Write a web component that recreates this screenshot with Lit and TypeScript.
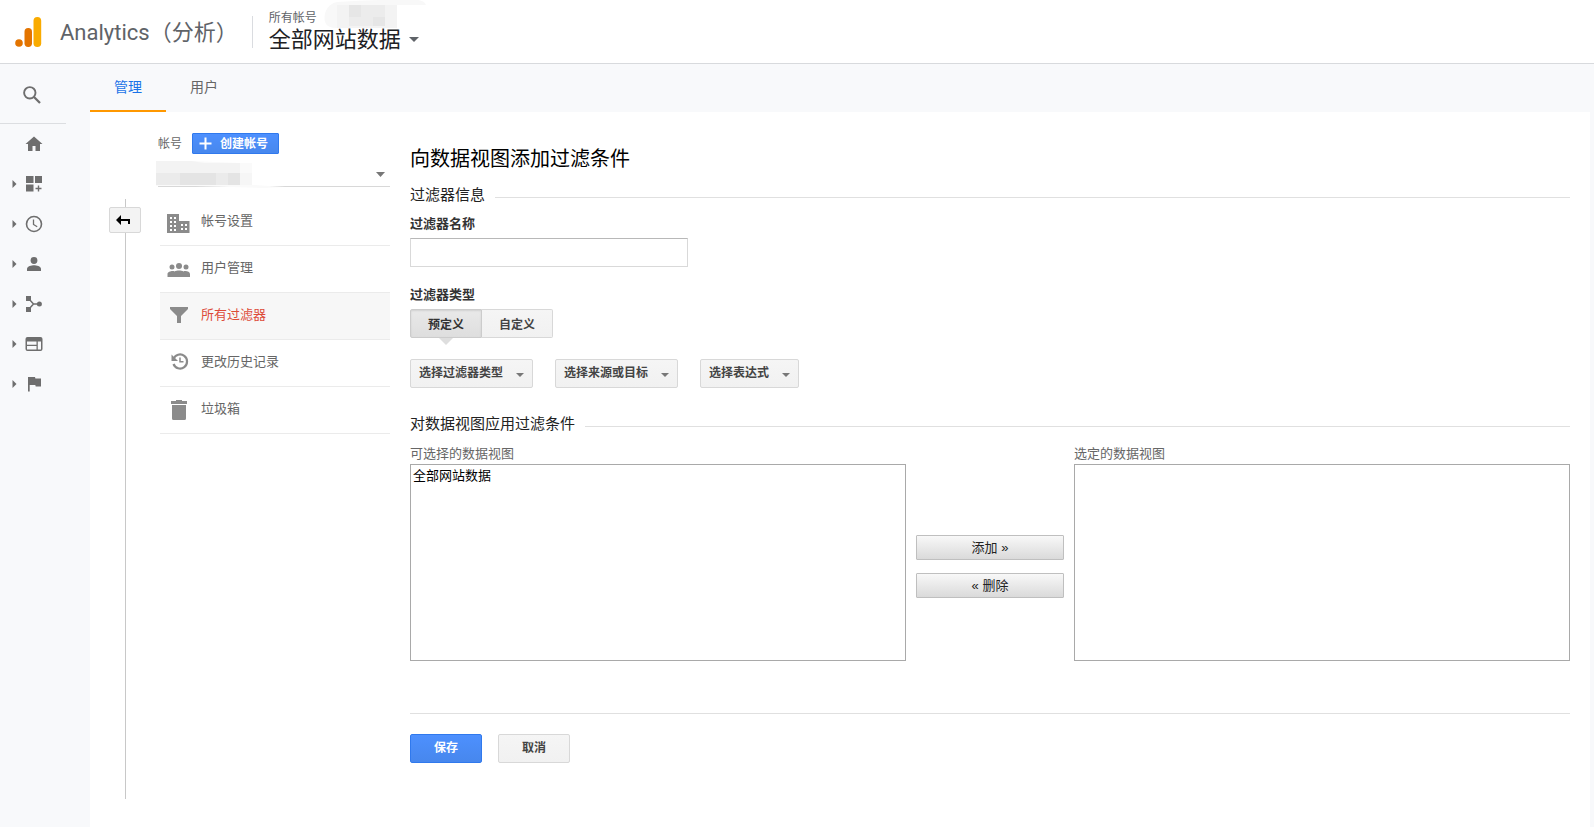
import { LitElement, html, svg, css } from "lit";
import { customElement, state } from "lit/decorators.js";

const railItems = [
  { label: "首页", open: false, icon: svg`<path d="M13 5.500 4.500 13H7v7h4.500v-5h3v5H19v-7h2.500z"/>` },
  { label: "自定义", open: true, icon: svg`<path d="M5 5h7.500v7H5zM14 5h7v7h-7zM5 13.500h7.500v7H5zM16.800 14.500h1.400v2.300h2.300v1.400h-2.300v2.300h-1.400v-2.300h-2.300v-1.400h2.300z"/>` },
  { label: "实时", open: true, icon: svg`<circle cx="13" cy="13" r="7.500" fill="none" stroke="#6e6e6e" stroke-width="1.600"/><path d="M12.500 8.500v5l3.700 2.300" fill="none" stroke="#6e6e6e" stroke-width="1.300"/>` },
  { label: "受众群体", open: true, icon: svg`<circle cx="13" cy="9.500" r="3.400"/><path d="M6 20v-2.300c0-2.400 4.700-3.500 7-3.500s7 1.100 7 3.500V20z"/>` },
  { label: "流量获取", open: true, icon: svg`<path d="M5 5h5v5H5zM5 16h5v5H5z"/><path d="M8 8l4.500 5L8 18M12 13h6" fill="none" stroke="#6e6e6e" stroke-width="1.500"/><circle cx="18.400" cy="13" r="2.500"/>` },
  { label: "行为", open: true, icon: svg`<path fill-rule="evenodd" d="M6.500 6h13a2 2 0 0 1 2 2v10a2 2 0 0 1-2 2h-13a2 2 0 0 1-2-2V8a2 2 0 0 1 2-2zM6 10.500v3.200h9.500v-3.200zM6 15v3.500h9.500V15zM16.800 10.500v8h3.200v-8z"/>` },
  { label: "转化", open: true, icon: svg`<path d="M7 6h7l.4 1.500H20v8h-5.300l-.4-1.500H8.700v6.500H7z"/>` },
];

const accountItems = [
  { label: "帐号设置", icon: svg`<path fill-rule="evenodd" d="M7 16h12v7h10.500v12H7zM10 19h2v2h-2zM14 19h2v2h-2zM10 23h2v2h-2zM14 23h2v2h-2zM10 27h2v2h-2zM14 27h2v2h-2zM10 31h2v2h-2zM14 31h2v2h-2zM21 26h2v2h-2zM25 26h2v2h-2zM21 30h2v2h-2zM25 30h2v2h-2z"/>` },
  { label: "用户管理", icon: svg`<circle cx="12" cy="22" r="2.500"/><circle cx="19" cy="21" r="3"/><circle cx="26" cy="22" r="2.500"/><path d="M7.500 32v-3c0-2 3-3 5-3 1 0 1.500.2 2 .4 1-.5 3-.9 4.500-.9s3.500.4 4.500.9c.5-.2 1-.4 2-.4 2 0 4.500 1 4.500 3v3z"/>` },
  { label: "所有过滤器", active: true, icon: svg`<path d="M10 15h18v2l-7 7v7h-4v-7l-7-7z"/>` },
  { label: "更改历史记录", icon: svg`<path d="M13.500 20a7 7 0 1 1 0 5" fill="none" stroke="#8b8b8b" stroke-width="2.200"/><path d="M11.500 15.500v6.500h6.500z"/><path d="M20 18.500v4.200h3.500" fill="none" stroke="#8b8b8b" stroke-width="1.500"/>` },
  { label: "垃圾箱", icon: svg`<path d="M11 15h5v-1h6v1h5v3H11zM12 19h14v13.500a1.500 1.500 0 0 1-1.500 1.500h-11a1.500 1.500 0 0 1-1.500-1.500z"/>` },
];

const filterPickers = ["选择过滤器类型", "选择来源或目标", "选择表达式"];

const base = css`
  *, *::before, *::after { box-sizing: border-box; }
  button, select, input { font: inherit; color: inherit; margin: 0; }
  button { cursor: pointer; padding: 0; }
  a { color: inherit; text-decoration: none; }
  h1, h2, p { margin: 0; font-weight: 400; }
  svg { display: block; flex: none; }
`;

@customElement("ga-header")
class GaHeader extends LitElement {
  static styles = [base, css`
    :host { display: flex; align-items: center; height: 64px; padding-left: 15px; background: #fff; border-bottom: 1px solid #d8dadd; }
    .brand { display: flex; align-items: center; gap: 18px; font: 22px/32px Roboto, "Noto Sans CJK SC", sans-serif; color: #5f6368; white-space: nowrap; }
    .brand span { padding-top: 2px; }
    .view { position: relative; display: grid; margin-left: 14px; padding: 0 0 0 16px; border: 0; border-left: 1px solid #dadce0; height: 32px; background: none; text-align: left; align-content: center; }
    .path { font-size: 12px; line-height: 16px; color: #5f6368; }
    .name { display: flex; align-items: center; gap: 8px; font-size: 22px; line-height: 28px; color: #202124; white-space: nowrap; }
    .redacted { position: absolute; left: 70px; top: -16px; }
  `];
  render() {
    return html`
      <a class="brand" href="#">
        <svg width="27" height="32" viewBox="0 0 27 32" aria-hidden="true">
          <circle cx="4" cy="27" r="3.800" fill="#e37400"/>
          <rect x="9.500" y="12" width="7.500" height="19" rx="3.700" fill="#e37400"/>
          <rect x="18.500" y="1" width="7.700" height="30" rx="3.800" fill="#f9ab00"/>
        </svg>
        <span>Analytics（分析）</span>
      </a>
      <button class="view">
        <span class="path">所有帐号</span>
        <span class="name">全部网站数据
          <svg width="10" height="5" viewBox="0 0 10 5"><path d="M0 0h10L5 5z" fill="#5f6368"/></svg>
        </span>
        <svg class="redacted" width="104" height="30" viewBox="0 0 104 30" aria-hidden="true">
          <path d="M2 22C0 14 4 4 14 2Q60-1 95 0q7 1 8 5L74 5v20L14 28Q4 28 2 22z" fill="#f8f8f8"/>
          <path d="M14 5h60v23H14z" fill="#f3f3f3"/>
          <path d="M38 5h24v12H38zM26 17h24v9H26z" fill="#ececec"/><path d="M26 5h12v12H26zM50 17h12v9H50z" fill="#e6e6e6"/>
        </svg>
      </button>`;
  }
}

@customElement("ga-rail")
class GaRail extends LitElement {
  static styles = [base, css`
    :host { display: block; width: 90px; flex: none; }
    .search { display: grid; place-items: center; width: 66px; height: 60px; padding: 2px 2px 0 0; border: 0; border-bottom: 1px solid #dcdee1; background: none; }
    nav { display: grid; }
    a { display: flex; align-items: center; height: 40px; padding-left: 12px; gap: 4px; }
    a svg { fill: #6e6e6e; }
    .closed { visibility: hidden; }
  `];
  render() {
    return html`
      <button class="search" aria-label="搜索">
        <svg width="18" height="18" viewBox="0 0 18 18"><circle cx="6.800" cy="6.800" r="5.700" fill="none" stroke="#6e6e6e" stroke-width="1.900"/><path d="M11 11l6 6" stroke="#6e6e6e" stroke-width="2.300"/></svg>
      </button>
      <nav>${railItems.map((i) => html`
        <a href="#" aria-label=${i.label}>
          <svg class=${i.open ? "" : "closed"} width="5" height="8" viewBox="0 0 5 8"><path d="M.5 0v8l4-4z"/></svg>
          <svg width="26" height="26" viewBox="0 0 26 26">${i.icon}</svg>
        </a>`)}</nav>`;
  }
}

@customElement("ga-account")
class GaAccount extends LitElement {
  static styles = [base, css`
    :host { display: block; width: 232px; flex: none; color: #666; }
    .top { display: flex; align-items: center; gap: 10px; font-size: 12px; line-height: 16px; }
    .create { display: flex; align-items: center; gap: 8px; height: 21px; padding: 0 10px 0 6px; border: 1px solid #3079ed; border-radius: 1px; background: linear-gradient(#4d90fe, #4787ed); color: #fff; font-weight: 700; }
    .picker { position: relative; display: block; }
    select { appearance: none; display: block; width: 100%; height: 33px; border: 0; border-bottom: 1px solid #d8d8d8; border-radius: 0; background: none; }
    .caret { position: absolute; right: 5px; top: 18px; }
    .redacted { position: absolute; left: -2px; top: 7px; }
    nav { display: grid; margin: 12px 0 0 2px; }
    .item { display: flex; align-items: center; height: 47px; padding-bottom: 2px; border-bottom: 1px solid #ebebeb; font-size: 13px; line-height: 18px; }
    .item svg { fill: #8b8b8b; }
    .active { background: #f7f7f7; color: #dd4b39; }
  `];
  render() {
    return html`
      <div class="top">
        <label for="account">帐号</label>
        <button class="create"><svg width="13" height="13" viewBox="0 0 13 13"><path d="M6.500.5v12M.5 6.500h12" stroke="#fff" stroke-width="2"/></svg>创建帐号</button>
      </div>
      <div class="picker">
        <select id="account"><option></option></select>
        <svg class="redacted" width="130" height="27" viewBox="0 0 130 27" aria-hidden="true">
          <path d="M0 0h36l48 2h12v22l33 2-20 1-70-2H0z" fill="#fafafa"/>
          <path d="M0 0h36l12 2h36v10H0z" fill="#f3f3f3"/><path d="M0 12h84v12H0z" fill="#ebebeb"/>
          <path d="M24 12h36v12H24zM72 12h12v12H72z" fill="#e4e4e4"/><path d="M84 12h12v12H84z" fill="#f6f6f6"/>
        </svg>
        <svg class="caret" width="9" height="5" viewBox="0 0 9 5"><path d="M0 0h9L4.500 5z" fill="#777"/></svg>
      </div>
      <nav>${accountItems.map((i) => html`
        <a class="item ${i.active ? "active" : ""}" href="#"><svg width="41" height="46" viewBox="0 0 41 46">${i.icon}</svg>${i.label}</a>`)}</nav>`;
  }
}

@customElement("ga-filter-form")
class GaFilterForm extends LitElement {
  static styles = [base, css`
    :host { display: block; flex: 1; min-width: 0; color: #333; font-size: 13px; line-height: 18px; }
    h1 { font-size: 20px; line-height: 28px; color: #000; margin-bottom: 12px; }
    h2 { display: flex; align-items: center; gap: 10px; font-size: 15px; line-height: 20px; color: #222; }
    h2::after { content: ""; flex: 1; height: 5px; border-bottom: 1px solid #e0e0e0; }
    .label { display: block; font-weight: 700; margin-bottom: 5px; }
    .info { display: grid; gap: 19px; margin: 10px 0 26px; }
    .text { display: block; width: 278px; height: 29px; padding: 0 8px; border: 1px solid #d9d9d9; border-top-color: #b8b8b8; }
    .toggle { display: flex; font-size: 12px; font-weight: 700; }
    .seg { position: relative; height: 29px; padding: 2px 17px 0; border: 1px solid #d8d8d8; border-radius: 2px 0 0 2px; background: linear-gradient(#f5f5f5, #f1f1f1); color: #444; }
    .seg + .seg { border-left: 0; border-radius: 0 2px 2px 0; }
    .seg[aria-pressed="true"] { background: linear-gradient(#e9e9e9, #dedede); border-color: #ccc; color: #333; box-shadow: inset 0 1px 2px #0000001a; }
    .seg[aria-pressed="true"]::after { content: ""; position: absolute; left: 28px; top: 28px; border: solid transparent; border-width: 7px 7px 0; border-top-color: #dedede; }
    .pickers { display: flex; gap: 22px; margin-top: 2px; }
    .picker { position: relative; }
    .picker::after { content: ""; position: absolute; right: 9px; top: 14px; border: solid transparent; border-width: 4px 4px 0; border-top-color: #777; pointer-events: none; }
    .picker select { appearance: none; display: block; height: 29px; padding: 0 28px 2px 8px; border: 1px solid #d8d8d8; border-radius: 2px; background: linear-gradient(#f5f5f5, #f1f1f1); font-size: 12px; font-weight: 700; color: #444; }
    .transfer { display: grid; grid-template-columns: 1fr 148px 1fr; column-gap: 10px; row-gap: 1px; margin-top: 11px; color: #666; }
    .transfer .right { grid-column: 3; }
    .list { width: 100%; height: 197px; padding: 0; border: 1px solid #a9a9a9; border-radius: 0; background: #fff; color: #000; outline: 0; }
    .list option { padding: 0 2px; min-height: 16px; line-height: 16px; }
    .moves { display: grid; gap: 13px; align-content: center; padding-top: 8px; }
    .move { height: 25px; border: 1px solid #bfbfbf; border-radius: 1px; background: linear-gradient(#f8f8f8, #dadada); color: #222; }
    .actions { display: flex; gap: 16px; margin-top: 52px; padding-top: 20px; border-top: 1px solid #e0e0e0; font-size: 12px; font-weight: 700; }
    .act { width: 72px; height: 29px; padding-bottom: 2px; border: 1px solid #d8d8d8; border-radius: 2px; background: linear-gradient(#f5f5f5, #f1f1f1); color: #444; }
    .save { border-color: #3079ed; background: linear-gradient(#4d90fe, #4787ed); color: #fff; }
  `];
  @state() kind = "预定义";
  render() {
    return html`
      <h1>向数据视图添加过滤条件</h1>
      <h2>过滤器信息</h2>
      <div class="info">
        <div><label class="label" for="name">过滤器名称</label><input class="text" id="name" type="text"></div>
        <div>
          <span class="label" id="kind">过滤器类型</span>
          <div class="toggle" role="group" aria-labelledby="kind">${["预定义", "自定义"].map((k) => html`
            <button class="seg" aria-pressed=${this.kind === k} @click=${() => (this.kind = k)}>${k}</button>`)}</div>
        </div>
        <div class="pickers">${filterPickers.map((p) => html`
          <div class="picker"><select aria-label=${p}><option>${p}</option></select></div>`)}</div>
      </div>
      <h2>对数据视图应用过滤条件</h2>
      <div class="transfer">
        <label for="available">可选择的数据视图</label>
        <label class="right" for="chosen">选定的数据视图</label>
        <select class="list" id="available" multiple><option>全部网站数据</option></select>
        <div class="moves"><button class="move">添加 »</button><button class="move">« 删除</button></div>
        <select class="list" id="chosen" multiple></select>
      </div>
      <div class="actions"><button class="act save">保存</button><button class="act">取消</button></div>`;
  }
}

@customElement("app-root")
class AppRoot extends LitElement {
  static styles = [base, css`
    :host { display: flex; flex-direction: column; min-height: 100vh; background: #f8f9fb; font-family: "Liberation Sans", "Noto Sans CJK SC", sans-serif; font-size: 13px; }
    .body { display: flex; flex: 1; }
    main { display: flex; flex-direction: column; flex: 1; min-width: 0; }
    .tabs { display: flex; }
    .tab { height: 48px; padding: 0 24px; border-bottom: 2px solid transparent; font-size: 14px; line-height: 46px; color: #666; }
    .current { color: #1a73e8; border-color: #ff9800; }
    .panel { display: flex; flex: 1; margin-right: 4px; padding: 0 20px 28px 19px; background: #fff; }
    .back { display: flex; flex-direction: column; width: 32px; margin-top: 87px; }
    .back::before, .back::after { content: ""; height: 8px; margin-left: 16px; border-left: 1px solid #c8c8c8; }
    .back::after { flex: 1; }
    .back button { display: grid; place-items: center; height: 26px; padding-right: 4px; border: 1px solid #d8d8d8; border-radius: 2px; background: #f3f3f3; }
    ga-account { margin: 21px 20px 0 17px; }
    ga-filter-form { margin-top: 33px; }
  `];
  render() {
    return html`
      <ga-header></ga-header>
      <div class="body">
        <ga-rail></ga-rail>
        <main>
          <nav class="tabs"><a class="tab current" href="#">管理</a><a class="tab" href="#">用户</a></nav>
          <div class="panel">
            <div class="back"><button aria-label="返回"><svg width="14" height="11" viewBox="0 0 14 11"><path d="M0 5l5-5v4h9v5h-2V6H5v4z"/></svg></button></div>
            <ga-account></ga-account>
            <ga-filter-form></ga-filter-form>
          </div>
        </main>
      </div>`;
  }
}
